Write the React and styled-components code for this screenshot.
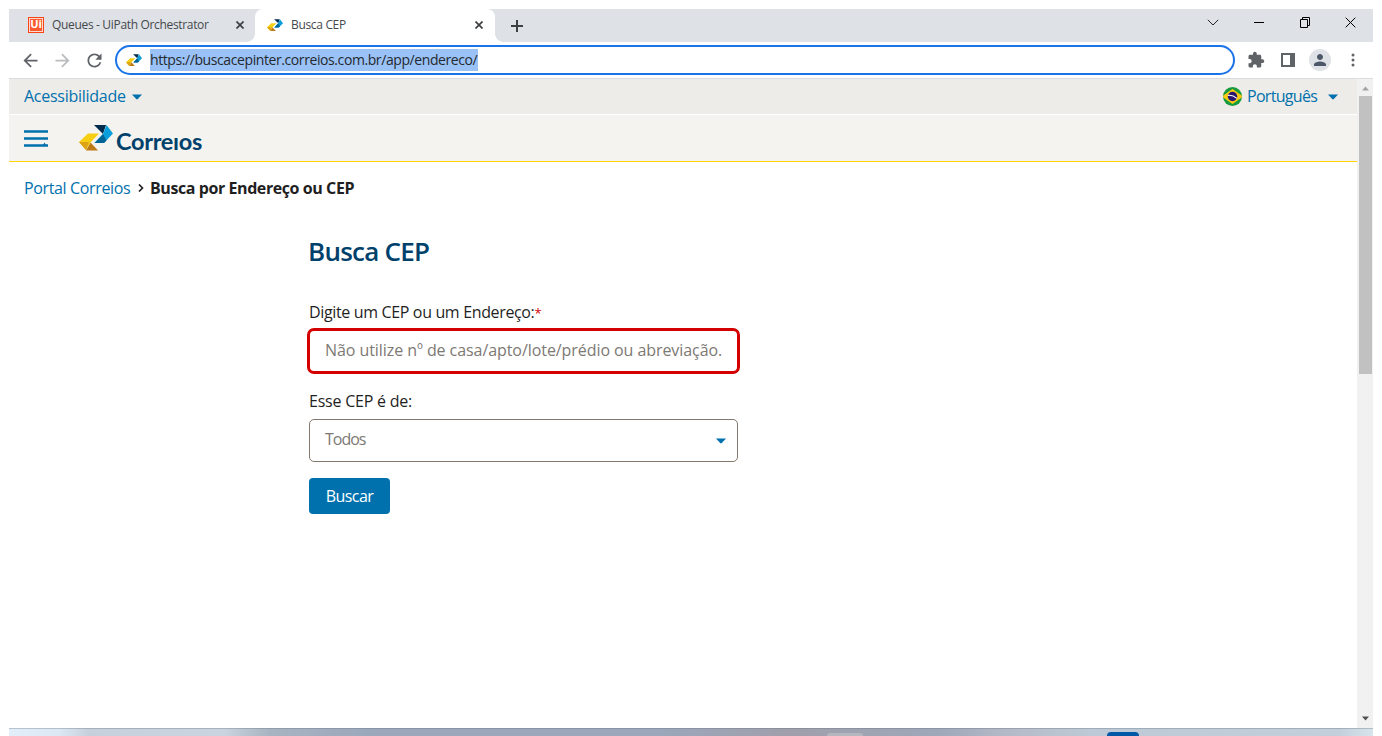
import React from "react";
import styled, { createGlobalStyle } from "styled-components";

const GlobalStyle = createGlobalStyle`
  * { box-sizing: border-box; }
  body {
    margin: 0;
    background: #fff;
    font-family: "Open Sans", "Noto Sans", sans-serif;
    overflow: hidden;
  }
  svg { display: block; flex: none; }
`;

const Desktop = styled.div`
  width: 1382px;
  height: 736px;
  padding: 9px 9px 0;
  display: flex;
  flex-direction: column;
`;

/* ---------- browser chrome ---------- */

const TabStrip = styled.div`
  height: 33px;
  flex: none;
  display: flex;
  background: #dee1e6;
`;

const Tab = styled.div`
  position: relative;
  width: ${(p) => (p.$active ? 240 : 246)}px;
  padding: 0 ${(p) => (p.$active ? "12px 1px 12px" : "11px 1px 19px")};
  display: flex;
  align-items: center;
  background: ${(p) => (p.$active ? "#fff" : "transparent")};
  border-radius: 8px 8px 0 0;

  ${(p) =>
    p.$active &&
    `
    &::before, &::after {
      content: "";
      position: absolute;
      bottom: 0;
      width: 8px;
      height: 8px;
    }
    &::before { left: -8px; background: radial-gradient(circle at 0 0, transparent 7.5px, #fff 8px); }
    &::after { right: -8px; background: radial-gradient(circle at 100% 0, transparent 7.5px, #fff 8px); }
  `}
`;

const TabTitle = styled.span`
  flex: 1;
  margin-left: 8px;
  font-size: 12px;
  line-height: 16px;
  letter-spacing: -0.33px;
  color: #45494d;
  white-space: nowrap;
`;

const UiBadge = styled.span`
  width: 16px;
  height: 16px;
  border: 1.5px solid #fa4616;
  background: #fb5a30;
  box-shadow: inset 0 0 0 1px #ffd9ce;
  color: #fff;
  font-size: 11px;
  font-weight: 700;
  line-height: 12px;
  text-align: center;
`;

const NewTab = styled.div`
  padding: 0 16px;
  display: flex;
  align-items: center;
`;

const WindowControls = styled.div`
  margin-left: auto;
  padding: 0 17px 6px 0;
  display: flex;
  align-items: center;
  gap: 34px;
`;

const Toolbar = styled.div`
  height: 37px;
  flex: none;
  padding: 0 10px 0 11px;
  display: flex;
  align-items: center;
  border-bottom: 1px solid #dadce0;
`;

const NavButtons = styled.div`
  width: 95px;
  display: flex;
  gap: 11px;
`;

const AddressBar = styled.div`
  width: 1120px;
  height: 30px;
  padding-left: 9px;
  display: flex;
  align-items: center;
  border: 2px solid #1a73e8;
  border-radius: 15px;
`;

const SelectedUrl = styled.span`
  margin-left: 8px;
  width: 328px;
  height: 22px;
  background: #9bc2f6;
  color: #23292f;
  font-size: 14px;
  line-height: 21px;
  letter-spacing: -0.41px;
  white-space: nowrap;
`;

const ToolbarActions = styled.div`
  padding-left: 12px;
  display: flex;
  align-items: center;
`;

const SidePanelButton = styled.div`
  margin-left: 16px;
`;

const Avatar = styled.div`
  width: 22px;
  height: 22px;
  margin: 0 20px 0 14px;
  display: grid;
  place-items: center;
  border-radius: 50%;
  background: #dee1e6;
`;

/* ---------- page ---------- */

const Viewport = styled.div`
  height: 649px;
  flex: none;
  display: flex;
`;

const Page = styled.div`
  flex: 1;
  display: flex;
  flex-direction: column;
`;

const UtilityBar = styled.div`
  height: 36px;
  flex: none;
  padding: 0 19px 0 15px;
  display: flex;
  align-items: center;
  justify-content: space-between;
  background: #eeece8;
  border-bottom: 1px solid #fff;
`;

const UtilityItem = styled.div`
  display: flex;
  align-items: center;
  color: #0071ad;
  font-size: 16px;
  line-height: 23px;
  letter-spacing: ${(p) => p.$spacing}px;
`;

const UtilityLabel = styled.span`
  width: ${(p) => p.$width}px;
  margin-left: ${(p) => p.$offset || 0}px;
  white-space: nowrap;
`;

const BrandBar = styled.header`
  height: 47px;
  flex: none;
  padding: 0 15px;
  display: flex;
  align-items: center;
  background: #f4f3ef;
  border-bottom: 1px solid #ffd500;
`;

const Brand = styled.div`
  margin-left: 31px;
  display: flex;
  align-items: center;
`;

const Wordmark = styled.span`
  margin: 6px 0 0 3px;
  font-family: "Lato", sans-serif;
  font-size: 23.5px;
  font-weight: 700;
  line-height: 26px;
  letter-spacing: -0.3px;
  color: #00416b;
`;

const Breadcrumb = styled.nav`
  padding: 15px 15px 0;
  display: flex;
  align-items: center;
  font-size: 16px;
  line-height: 22px;
`;

const CrumbLink = styled.a`
  width: 107px;
  color: #0071ad;
  letter-spacing: -0.36px;
  white-space: nowrap;
`;

const CrumbCurrent = styled.strong`
  margin-left: 5px;
  color: #1f1f1f;
  font-weight: 700;
  letter-spacing: -0.42px;
`;

const SearchForm = styled.form`
  width: 429px;
  margin: 34px 0 0 300px;
  display: flex;
  flex-direction: column;
`;

const Title = styled.h1`
  margin: 0 0 32px -1px;
  color: #00416b;
  font-size: 26px;
  font-weight: 650;
  line-height: 36px;
  letter-spacing: -0.75px;
`;

const Label = styled.label`
  height: 22px;
  color: #1f1f1f;
  font-size: 16px;
  line-height: 23px;
  letter-spacing: ${(p) => p.$spacing}px;
`;

const Required = styled.span`
  color: #d40000;
  font-size: 13px;
`;

const Field = styled.div`
  display: flex;
  justify-content: space-between;
  font-size: 16px;
  line-height: 22px;
  white-space: nowrap;
  color: #7d7974;
`;

const AddressField = styled(Field)`
  height: 46px;
  margin: 5px -2px 16px;
  padding: 8px 15px 0;
  border: 3px solid #d40000;
  border-radius: 7px;
  letter-spacing: -0.07px;
`;

const SelectField = styled(Field)`
  height: 43px;
  margin: 7px 0 16px;
  padding: 8px 11px 0 15px;
  border: 1px solid #82786f;
  border-radius: 5px;
  letter-spacing: -1px;

  svg { margin-top: 10px; }
`;

const SubmitButton = styled.button`
  width: 81px;
  height: 36px;
  padding: 0 0 1px;
  border: 0;
  border-radius: 4px;
  background: #0071ad;
  color: #fff;
  font-family: inherit;
  font-size: 16px;
  font-weight: 500;
  letter-spacing: -0.6px;
`;

const Scrollbar = styled.div`
  width: 16px;
  padding: 7px 1px 7px 2px;
  display: flex;
  flex-direction: column;
  align-items: center;
  justify-content: space-between;
  background: #f1f1f1;
`;

const Thumb = styled.div`
  width: 13px;
  height: 278px;
  margin: 5px 0 auto;
  background: #c1c1c1;
`;

const Wallpaper = styled.div`
  flex: 1;
  display: flex;
  align-items: flex-end;
  border-top: 1px solid rgba(100, 115, 130, 0.35);
  background: linear-gradient(
    90deg,
    #e2eefa 0, #dce8f3 50px, #c6d0db 80px, #c9d4df 215px, #a9b4c2 260px,
    #9ba7bb 360px, #9ca7bb 650px, #a09fab 780px, #9ea8b9 930px,
    #b5bac7 1000px, #bdc9d6 1080px, #c3d0da 1330px, #d8e4ec 1364px
  );
`;

const DesktopItem = styled.div`
  width: ${(p) => p.$width}px;
  height: ${(p) => p.$height}px;
  margin-left: ${(p) => p.$gap}px;
  border-radius: 5px 5px 0 0;
  background: ${(p) => p.$color};
`;

/* ---------- drawings ---------- */

const Symbol = ({ width, height }) => (
  <svg width={width} height={height} viewBox="0 0 34 26">
    <path d="M15 0H27L24 9Z" fill="#002b4d" />
    <path d="M27.5 0L34 8.5L25 18H15.5L24 9Z" fill="#0a9edb" />
    <path d="M24 9L15.5 18H25L27.5 15.5Z" fill="#006596" />
    <path d="M9 8.5H20L11.5 17.5L7 25L0 17Z" fill="#f7cf12" />
    <path d="M0 17H10L7 25Z" fill="#dda315" />
    <path d="M11.5 17.5L19 25.5H7Z" fill="#bd7a17" />
  </svg>
);

const Caret = () => (
  <svg width="10" height="6" viewBox="0 0 10 6">
    <path d="M0 0.5H10L5.8 5.1Q5 5.9 4.2 5.1Z" fill="#0071ad" />
  </svg>
);

const Cross = ({ size = 8, weight = 1.7, color = "#3c4043" }) => (
  <svg width={size} height={size} viewBox="0 0 10 10">
    <path d="M0.6 0.6L9.4 9.4M9.4 0.6L0.6 9.4" stroke={color} strokeWidth={(weight * 10) / size} />
  </svg>
);

const Glyph = ({ d, color = "#5f6368", size = 21 }) => (
  <svg width={size} height={size} viewBox="0 0 24 24">
    <path d={d} fill={color} />
  </svg>
);

const BACK = "M20 11H7.83l5.59-5.59L12 4l-8 8 8 8 1.41-1.41L7.83 13H20v-2z";
const FORWARD = "M12 4l-1.41 1.41L16.17 11H4v2h12.17l-5.58 5.59L12 20l8-8z";
const RELOAD =
  "M17.65 6.35C16.2 4.9 14.21 4 12 4c-4.42 0-7.99 3.58-7.99 8s3.57 8 7.99 8c3.73 0 6.84-2.55 7.73-6h-2.08c-.82 2.33-3.04 4-5.65 4-3.31 0-6-2.69-6-6s2.69-6 6-6c1.66 0 3.14.69 4.22 1.78L13 11h7V4l-2.35 2.35z";
const PUZZLE =
  "M20.5 11H19V7c0-1.1-.9-2-2-2h-4V3.5C13 2.12 11.88 1 10.5 1S8 2.12 8 3.5V5H4c-1.1 0-1.99.9-1.99 2v3.8H3.5c1.49 0 2.7 1.21 2.7 2.7s-1.21 2.7-2.7 2.7H2V20c0 1.1.9 2 2 2h3.8v-1.5c0-1.49 1.21-2.7 2.7-2.7 1.49 0 2.7 1.21 2.7 2.7V22H17c1.1 0 2-.9 2-2v-4h1.5c1.38 0 2.5-1.12 2.5-2.5S21.88 11 20.5 11z";
const PERSON =
  "M12 12c2.21 0 4-1.79 4-4s-1.79-4-4-4-4 1.79-4 4 1.79 4 4 4zm0 2c-2.67 0-8 1.34-8 4v2h16v-2c0-2.66-5.33-4-8-4z";

const Flag = () => (
  <svg width="19" height="19" viewBox="0 0 19 19">
    <defs>
      <clipPath id="round"><circle cx="9.5" cy="9.5" r="9.5" /></clipPath>
    </defs>
    <g clipPath="url(#round)">
      <rect width="19" height="19" fill="#169b3e" />
      <path d="M9.5 2L20 9.5L9.5 17L-1 9.5Z" fill="#fdc913" />
      <circle cx="9.5" cy="9.5" r="4.7" fill="#28166f" />
      <path d="M5 8.4Q10 7.8 13.8 11.4" stroke="#fff" strokeWidth="1.1" fill="none" />
    </g>
  </svg>
);

export default function App() {
  return (
    <Desktop>
      <GlobalStyle />
      <TabStrip>
        <Tab>
          <UiBadge>Ui</UiBadge>
          <TabTitle>Queues - UiPath Orchestrator</TabTitle>
          <Cross />
        </Tab>
        <Tab $active>
          <Symbol width={16} height={12.5} />
          <TabTitle>Busca CEP</TabTitle>
          <Cross />
        </Tab>
        <NewTab>
          <svg width="12" height="12" viewBox="0 0 12 12">
            <path d="M6 0V12M0 6H12" stroke="#3c4043" strokeWidth="2" />
          </svg>
        </NewTab>
        <WindowControls>
          <svg width="12" height="7" viewBox="0 0 12 7">
            <path d="M0.8 0.8L6 6L11.2 0.8" fill="none" stroke="#222" strokeWidth="1" />
          </svg>
          <svg width="12" height="11" viewBox="0 0 12 11">
            <path d="M1 5.5H11" stroke="#000" />
          </svg>
          <svg width="12" height="11" viewBox="0 0 12 11">
            <path d="M1.5 2.5H8.5V10.5H1.5ZM3.5 2.5V0.5H10.5V8.5H8.5" fill="none" stroke="#000" />
          </svg>
          <Cross size={11} weight={1} color="#000" />
        </WindowControls>
      </TabStrip>

      <Toolbar>
        <NavButtons>
          <Glyph d={BACK} />
          <Glyph d={FORWARD} color="#babcbe" />
          <Glyph d={RELOAD} />
        </NavButtons>
        <AddressBar>
          <Symbol width={16} height={12.5} />
          <SelectedUrl>https://buscacepinter.correios.com.br/app/endereco/</SelectedUrl>
        </AddressBar>
        <ToolbarActions>
          <Glyph d={PUZZLE} size={18} />
          <SidePanelButton>
            <svg width="14" height="14" viewBox="0 0 14 14">
              <path d="M1 1H13V13H1Z" fill="none" stroke="#5f6368" strokeWidth="2" />
              <path d="M9 0H14V14H9Z" fill="#5f6368" />
            </svg>
          </SidePanelButton>
          <Avatar>
            <Glyph d={PERSON} color="#4d576a" size={18} />
          </Avatar>
          <svg width="4" height="16" viewBox="0 0 4 16">
            <circle cx="2" cy="3" r="1.5" fill="#5f6368" />
            <circle cx="2" cy="8" r="1.5" fill="#5f6368" />
            <circle cx="2" cy="13" r="1.5" fill="#5f6368" />
          </svg>
        </ToolbarActions>
      </Toolbar>

      <Viewport>
        <Page>
          <UtilityBar>
            <UtilityItem $spacing={-0.27}>
              <UtilityLabel $width={108}>Acessibilidade</UtilityLabel>
              <Caret />
            </UtilityItem>
            <UtilityItem $spacing={-0.7}>
              <Flag />
              <UtilityLabel $width={81} $offset={5}>Português</UtilityLabel>
              <Caret />
            </UtilityItem>
          </UtilityBar>

          <BrandBar>
            <svg width="24" height="17" viewBox="0 0 24 17">
              <path d="M0 1.5H24M0 8.5H24M0 15.5H24" stroke="#0071ad" strokeWidth="2.4" />
              <path d="M19 15L20.5 12.5L22 15Z" fill="#0071ad" />
            </svg>
            <Brand>
              <Symbol width={34} height={26} />
              <Wordmark>Correıos</Wordmark>
            </Brand>
          </BrandBar>

          <Breadcrumb>
            <CrumbLink>Portal Correios</CrumbLink>
            <svg width="14" height="8" viewBox="0 0 14 8">
              <path d="M8 0.5L11.5 4L8 7.5" fill="none" stroke="#1f1f1f" strokeWidth="1.6" />
            </svg>
            <CrumbCurrent>Busca por Endereço ou CEP</CrumbCurrent>
          </Breadcrumb>

          <SearchForm>
            <Title>Busca CEP</Title>
            <Label $spacing={-0.35}>
              Digite um CEP ou um Endereço:<Required>*</Required>
            </Label>
            <AddressField>Não utilize nº de casa/apto/lote/prédio ou abreviação.</AddressField>
            <Label $spacing={-0.22}>Esse CEP é de:</Label>
            <SelectField>
              Todos
              <Caret />
            </SelectField>
            <SubmitButton type="button">Buscar</SubmitButton>
          </SearchForm>
        </Page>
        <Scrollbar>
          <svg width="7" height="5" viewBox="0 0 7 4"><path d="M0 4L3.5 0L7 4Z" fill="#a3a3a3" /></svg>
          <Thumb />
          <svg width="7" height="5" viewBox="0 0 7 4"><path d="M0 0L3.5 4L7 0Z" fill="#505050" /></svg>
        </Scrollbar>
      </Viewport>

      <Wallpaper>
        <DesktopItem $width={36} $height={3} $gap={818} $color="#b5b7bf" />
        <DesktopItem $width={32} $height={4} $gap={244} $color="#0059a6" />
      </Wallpaper>
    </Desktop>
  );
}
